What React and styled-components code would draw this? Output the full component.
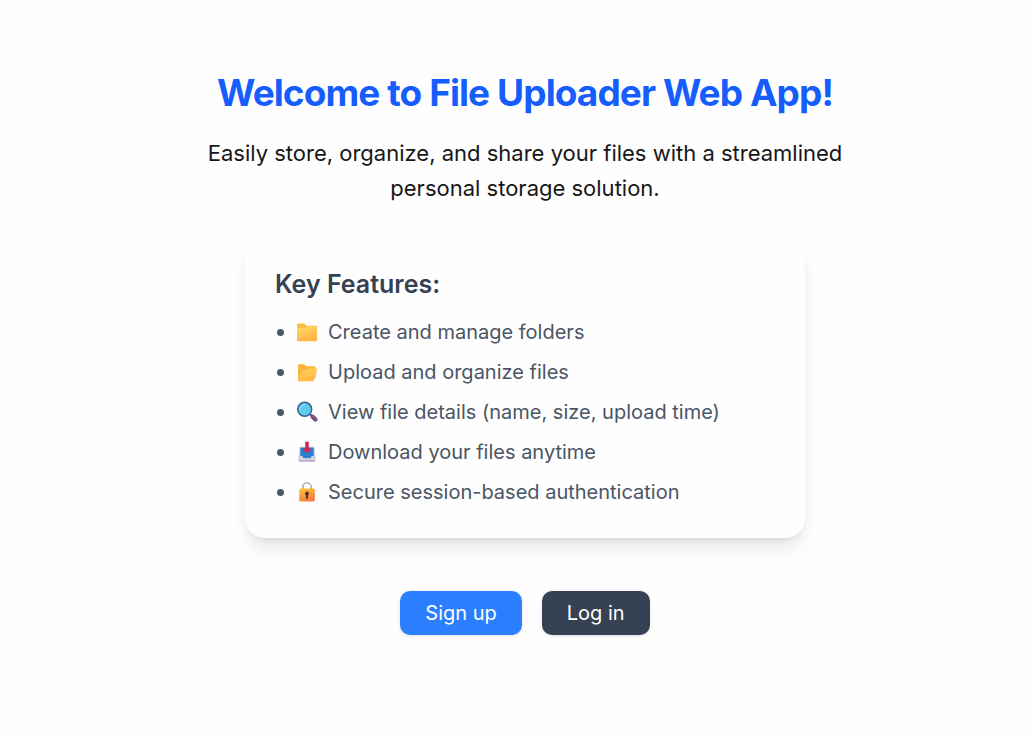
import React from "react";
import styled, { createGlobalStyle } from "styled-components";

const GlobalStyle = createGlobalStyle`
  *, *::before, *::after { box-sizing: border-box; }
  body {
    margin: 0;
    background: #fefefe;
    color: #171717;
    font-family: Inter, "Liberation Sans", sans-serif;
    font-size: 20px;
    line-height: 30px;
  }
`;

const Page = styled.main`
  display: flex;
  flex-direction: column;
  align-items: center;
  min-height: 100vh;
  padding: 70px 20px 40px 39px;
`;

const Title = styled.h1`
  margin: 0 0 20px;
  color: #155dfc;
  font-size: 37px;
  line-height: 46px;
  font-weight: 700;
  letter-spacing: -0.025em;
  text-align: center;
`;

const Lead = styled.p`
  max-width: 720px;
  margin: 0 0 31px;
  font-size: 22px;
  line-height: 35px;
  text-align: center;
`;

const Card = styled.section`
  width: 100%;
  max-width: 560px;
  margin-bottom: 53px;
  padding: 30px 30px 31px;
  border-radius: 20px;
  background: #fefefe;
  box-shadow: 0 13px 19px -4px rgba(0, 0, 0, 0.1), 0 5px 8px -5px rgba(0, 0, 0, 0.1);
`;

const CardTitle = styled.h2`
  margin: 0 0 15px;
  color: #364153;
  font-size: 25px;
  line-height: 35px;
  font-weight: 600;
`;

const FeatureList = styled.ul`
  display: grid;
  gap: 10px;
  margin: 0;
  padding: 0;
  list-style: none;
  color: #4a5565;
`;

const Feature = styled.li`
  display: flex;
  align-items: center;
  line-height: 30px;

  &::before {
    content: "";
    flex: none;
    width: 7px;
    height: 7px;
    margin: 0 12px 0 2px;
    border-radius: 50%;
    background: currentColor;
  }
`;

const Icon = styled.svg`
  flex: none;
  width: 22px;
  height: 22px;
  margin-right: 10px;
`;

const Actions = styled.div`
  display: flex;
  gap: 20px;
`;

const Button = styled.button`
  padding: 7px 25px;
  border: 0;
  border-radius: 10px;
  background: ${({ $dark }) => ($dark ? "#364153" : "#2b7fff")};
  color: #ffffff;
  font: inherit;
  box-shadow: 0 1px 4px rgba(0, 0, 0, 0.1), 0 1px 2px -1px rgba(0, 0, 0, 0.1);
  cursor: pointer;
`;

const Gradient = ({ id, from, to }) => (
  <linearGradient id={id} x1="0" y1="0" x2="0.4" y2="1">
    <stop offset="0" stopColor={from} />
    <stop offset="1" stopColor={to} />
  </linearGradient>
);

const FolderIcon = () => (
  <Icon viewBox="0 0 22 22" aria-hidden="true">
    <defs><Gradient id="folder" from="#ffdb65" to="#ffb545" /></defs>
    <path d="M1 4v-.4Q1 2.5 2 2.5h5.9q.6 0 1 .5l1 1.2q.4.5 1 .5H20q1 0 1 1V10H1z" fill="#fdbb42" />
    <path d="M1 8q0-.9.9-.9h6.3q.6 0 1-.4l.8-.8q.4-.4 1-.4h9q1 0 1 1v12.8q0 1-1 1H2q-1 0-1-1z" fill="url(#folder)" />
  </Icon>
);

const OpenFolderIcon = () => (
  <Icon viewBox="0 0 22 22" aria-hidden="true">
    <defs><Gradient id="open-folder" from="#ffd660" to="#ffb545" /></defs>
    <path d="M2 4.5q0-1.2 1.2-1.2h4.6q.6 0 1 .5l.9 1q.4.4 1 .4h7.6q1.2 0 1.2 1.2V17L5 20.3H3.2Q2 20.3 2 19z" fill="#fbb63e" />
    <path d="M6.2 10.1q.3-.8 1.1-.8h3.3q.5 0 .9-.4l.9-1q.4-.4 1-.4h7q1.2 0 .8 1.2L18 18.9q-.4 1.4-1.8 1.4H3.5q-1.5 0-1-1.4z" fill="url(#open-folder)" />
  </Icon>
);

const SearchIcon = () => (
  <Icon viewBox="0 0 22 22" aria-hidden="true">
    <path d="m13.2 13.5 1.3-1.3 2.5 2.4-1.3 1.3z" fill="#574779" />
    <path d="m16.7 15.8 2.7 2.7" stroke="#68447b" strokeWidth="4.2" strokeLinecap="round" />
    <path d="m16.4 14.9 3.9 3.8" stroke="#91618f" strokeWidth="1.2" strokeLinecap="round" />
    <circle cx="8.7" cy="8.3" r="7" fill="#5bcbeb" stroke="#425b91" strokeWidth="1.5" />
    <path d="M4 8.7A5 5 0 0 1 8.9 3.7" stroke="#7edff4" strokeWidth="1.3" fill="none" strokeLinecap="round" />
  </Icon>
);

const DownloadIcon = () => (
  <Icon viewBox="0 0 22 22" aria-hidden="true">
    <path d="M4.5 5.5h13q1 0 1.1.9l.9 8.2v4.8q0 1.3-1.3 1.3H3.8q-1.3 0-1.3-1.3v-4.8l.9-8.2q.1-.9 1.1-.9z" fill="#d9d6e6" />
    <path d="M5.1 6.5h11.8q.8 0 .8.8v7.9h-2l-1.2 2H7.5l-1.2-2h-2V7.3q0-.8.8-.8z" fill="#287fd0" />
    <path d="M2.5 15.2h3.8l1.2 2h7l1.2-2h3.8v4.2q0 1.3-1.3 1.3H3.8q-1.3 0-1.3-1.3z" fill="#d5cee0" />
    <path d="M3 19.9h16" stroke="#b5a0c7" strokeWidth="1" />
    <path d="M9.2.7h3.6v6.9H15q.6 0 .2.5l-3.7 3.8q-.5.5-1 0L6.8 8.1q-.4-.5.2-.5h2.2z" fill="#dc234f" />
  </Icon>
);

const LockIcon = () => (
  <Icon viewBox="0 0 22 22" aria-hidden="true">
    <defs><Gradient id="lock" from="#ffc536" to="#f58040" /></defs>
    <path d="M6.9 9.2V6a4.1 4.1 0 0 1 8.2 0v3.2" fill="none" stroke="#bcb8c6" strokeWidth="1.9" />
    <rect x="3.2" y="7.5" width="15.6" height="13" rx="1.5" fill="url(#lock)" />
    <path d="M11 10.5a2 2 0 0 0-1 3.7V17q0 .9 1 .9t1-.9v-2.8a2 2 0 0 0-1-3.7z" fill="#49312f" />
  </Icon>
);

const features = [
  { icon: FolderIcon, text: "Create and manage folders" },
  { icon: OpenFolderIcon, text: "Upload and organize files" },
  { icon: SearchIcon, text: "View file details (name, size, upload time)" },
  { icon: DownloadIcon, text: "Download your files anytime" },
  { icon: LockIcon, text: "Secure session-based authentication" },
];

export default function App() {
  return (
    <>
      <GlobalStyle />
      <Page>
        <Title>Welcome to File Uploader Web App!</Title>
        <Lead>
          Easily store, organize, and share your files with a streamlined personal storage solution.
        </Lead>
        <Card>
          <CardTitle>Key Features:</CardTitle>
          <FeatureList>
            {features.map(({ icon: FeatureIcon, text }) => (
              <Feature key={text}>
                <FeatureIcon />
                {text}
              </Feature>
            ))}
          </FeatureList>
        </Card>
        <Actions>
          <Button type="button">Sign up</Button>
          <Button type="button" $dark>Log in</Button>
        </Actions>
      </Page>
    </>
  );
}
